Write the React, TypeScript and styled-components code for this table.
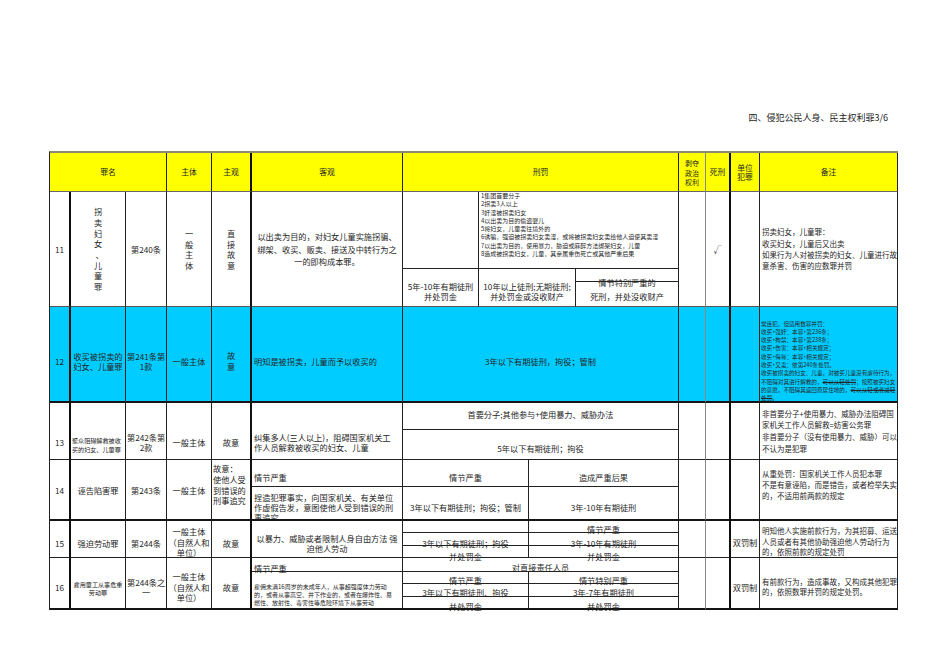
import React from "react";
import styled, { createGlobalStyle } from "styled-components";

const YELLOW = "#ffff00";
const CYAN = "#00ccff";

const GlobalStyle = createGlobalStyle`
  html, body {
    margin: 0;
    padding: 0;
    background: #fff;
  }
  body {
    font-family: "Noto Sans CJK SC", "Liberation Serif", sans-serif;
    color: #262626;
  }
`;

const Page = styled.div`
  width: 950px;
  height: 672px;
  box-sizing: border-box;
  padding-top: 111px;
  overflow: hidden;
`;

const Title = styled.div`
  padding-right: 62px;
  margin-bottom: 26px;
  text-align: right;
  font-size: 9px;
  line-height: 14px;
`;

const Sheet = styled.div`
  margin-left: 49px;
  width: max-content;
  display: grid;
  grid-template-columns: 21px 55px 41px 45px 40px 151px 76px 50px 47px 103px 27px 25px 29px 138px;
  grid-template-rows: 39px 77px 13px 25px 96px 27px 30px 27px 34px 12px 13px 12px 14px 12px 13px 13px;
  border-left: 1px solid #222;
  border-top: 2px solid #8b8b72;
`;

// grid lines that are drawn heavier / lighter in the sheet
const endOf = (span: string) => Number(span.split("/")[1]);
const vLine = (c: string) => {
    const e = endOf(c);
    if (e === 2 || e === 6 || e === 13) return "2px solid #111";
    if (e === 12) return "1px solid #8a8a8a";
    return "1px solid #222";
};
const hLine = (r: string) => {
    const e = endOf(r);
    if (e === 6 || e === 10 || e === 17) return "2px solid #151515";
    if (e === 2) return "1px solid #666";
    if (e === 5) return "1px solid #555";
    return "1px solid #222";
};

type CellProps = {
    $c: string;
    $r: string;
    $bg?: string;
    $ta?: "left" | "center";
    $v?: "flex-start" | "center";
    $pt?: number;
    $pb?: number;
    $px?: number;
    $fs?: number;
    $lh?: number;
    $clip?: boolean;
};

const CellBox = styled.div<CellProps>`
    grid-column: ${p => p.$c};
    grid-row: ${p => p.$r};
    box-sizing: border-box;
    min-width: 0;
    min-height: 0;
    display: flex;
    flex-direction: column;
    justify-content: ${p => p.$v ?? "center"};
    padding: ${p => p.$pt ?? 0}px ${p => p.$px ?? 2}px ${p => p.$pb ?? 0}px;
    background: ${p => p.$bg ?? "transparent"};
    border-right: ${p => vLine(p.$c)};
    border-bottom: ${p => hLine(p.$r)};
    text-align: ${p => p.$ta ?? "center"};
    font-size: ${p => p.$fs ?? 8.2}px;
    line-height: ${p => p.$lh ?? 10}px;
    white-space: nowrap;
    overflow: ${p => (p.$clip ? "hidden" : "visible")};
`;

const CellText = styled.div``;

const StackChar = styled.span<{ $mark?: boolean }>`
    display: block;
    padding-left: ${p => (p.$mark ? "3px" : "0")};
`;

const Struck = styled.span`
    text-decoration: line-through;
`;

function C({ children, ...rest }: CellProps & { children?: React.ReactNode }) {
    return (
        <CellBox {...rest}>
            <CellText>{children}</CellText>
        </CellBox>
    );
}

function Stack({ text }: { text: string }) {
    return (
        <>
            {[...text].map((ch, i) => (
                <StackChar key={i} $mark={ch === "、"}>
                    {ch}
                </StackChar>
            ))}
        </>
    );
}

const H = (props: Omit<CellProps, "$r" | "$bg"> & { children?: React.ReactNode }) => (
    <C {...props} $r="1/2" $bg={YELLOW} $fs={props.$fs ?? 7.8} />
);

const B = (props: Omit<CellProps, "$r" | "$bg"> & { children?: React.ReactNode }) => (
    <C $pt={14} {...props} $r="5/6" $bg={CYAN} />
);

function App() {
    return (
        <Page>
            <GlobalStyle />
            <Title>四、侵犯公民人身、民主权利罪3/6</Title>
            <Sheet>
                {/* header */}
                <H $c="1/4">罪名</H>
                <H $c="4/5">主体</H>
                <H $c="5/6">主观</H>
                <H $c="6/7">客观</H>
                <H $c="7/11">刑罚</H>
                <H $c="11/12" $fs={7} $lh={9.4} $pt={3} $px={1}>
                    剥夺<br />政治<br />权利
                </H>
                <H $c="12/13">死刑</H>
                <H $c="13/14" $lh={9.5} $px={1}>
                    单位<br />犯罪
                </H>
                <H $c="14/15">备注</H>

                {/* 11 */}
                <C $c="1/2" $r="2/5" $px={0}>11</C>
                <C $c="2/3" $r="2/5" $lh={10.7}>
                    <Stack text="拐卖妇女、儿童罪" />
                </C>
                <C $c="3/4" $r="2/5" $px={1}>第240条</C>
                <C $c="4/5" $r="2/5" $lh={10.5}>
                    <Stack text="一般主体" />
                </C>
                <C $c="5/6" $r="2/5" $lh={10.5}>
                    <Stack text="直接故意" />
                </C>
                <C $c="6/7" $r="2/5" $lh={12.5}>
                    以出卖为目的，对妇女儿童实施拐骗、<br />
                    绑架、收买、贩卖、接送及中转行为之<br />
                    一的即构成本罪。
                </C>
                <C $c="7/8" $r="2/3" />
                <C $c="8/11" $r="2/3" $ta="left" $v="flex-start" $fs={6} $lh={8.3}>
                    1集团首要分子<br />
                    2拐卖3人以上<br />
                    3奸淫被拐卖妇女<br />
                    4以出卖为目的偷盗婴儿<br />
                    5将妇女，儿童卖往境外的<br />
                    6诱骗，强迫被拐卖妇女卖淫，或将被拐卖妇女卖给他人迫使其卖淫<br />
                    7以出卖为目的，使用暴力，胁迫或麻醉方法绑架妇女，儿童<br />
                    8造成被拐卖妇女，儿童，其亲属重伤死亡或其他严重后果
                </C>
                <C $c="7/8" $r="3/5" $pt={6} $lh={10} $px={1}>
                    5年-10年有期徒刑<br />并处罚金
                </C>
                <C $c="8/10" $r="3/5" $pt={6} $lh={10}>
                    10年以上徒刑;无期徒刑;<br />并处罚金或没收财产
                </C>
                <C $c="10/11" $r="3/4" $v="flex-start" $pt={8}>情节特别严重的</C>
                <C $c="10/11" $r="4/5" $pt={4}>死刑，并处没收财产</C>
                <C $c="11/12" $r="2/5" />
                <C $c="12/13" $r="2/5">√</C>
                <C $c="13/14" $r="2/5" />
                <C $c="14/15" $r="2/5" $ta="left" $fs={7.5} $lh={11.3}>
                    拐卖妇女，儿童罪：<br />
                    收买妇女，儿童后又出卖<br />
                    如果行为人对被拐卖的妇女、儿童进行故<br />
                    意杀害、伤害的应数罪并罚
                </C>

                {/* 12 */}
                <B $c="1/2" $px={0}>12</B>
                <B $c="2/3" $px={1}>
                    收买被拐卖的<br />妇女、儿童罪
                </B>
                <B $c="3/4" $px={1}>
                    第241条第<br />1款
                </B>
                <B $c="4/5">一般主体</B>
                <B $c="5/6" $lh={11}>
                    故<br />意
                </B>
                <B $c="6/7" $ta="left">明知是被拐卖，儿童而予以收买的</B>
                <B $c="7/11">3年以下有期徒刑，拘役；管制</B>
                <B $c="11/12" />
                <B $c="12/13" />
                <B $c="13/14" />
                <B $c="14/15" $ta="left" $fs={5.6} $lh={8.3} $px={1}>
                    常连犯，但适用数罪并罚：<br />
                    收买+强奸：本罪+第236条；<br />
                    收买+拘禁：本罪+第238条；<br />
                    收买+伤害：本罪+相关规定；<br />
                    收买+侮辱：本罪+相关规定；<br />
                    收买+又卖：依第240条处罚。<br />
                    收买被拐卖的妇女、儿童，对被买儿童没有虐待行为，<br />
                    不阻碍对其进行解救的，<Struck>可以从轻处罚</Struck>；按照被买妇女<br />
                    的意愿，不阻碍其返回原居住地的，<Struck>可以从轻或者减轻</Struck><br />
                    <Struck>处罚</Struck>。
                </B>

                {/* 13 */}
                <C $c="1/2" $r="6/8" $pt={22} $px={0}>13</C>
                <C $c="2/3" $r="6/8" $ta="left" $fs={6.1} $lh={8.4} $pt={29} $px={1}>
                    聚众阻碍解救被收<br />买的妇女、儿童罪
                </C>
                <C $c="3/4" $r="6/8" $pt={22} $lh={10} $px={1}>
                    第242条第<br />2款
                </C>
                <C $c="4/5" $r="6/8" $pt={22}>一般主体</C>
                <C $c="5/6" $r="6/8" $pt={22}>故意</C>
                <C $c="6/7" $r="6/8" $ta="left" $pt={22} $lh={10}>
                    纠集多人(三人以上)，阻碍国家机关工<br />
                    作人员解救被收买的妇女、儿童
                </C>
                <C $c="7/11" $r="6/7" $pb={4}>首要分子;其他参与+使用暴力、威胁办法</C>
                <C $c="7/11" $r="7/8" $pt={6}>5年以下有期徒刑；拘役</C>
                <C $c="11/12" $r="6/8" />
                <C $c="12/13" $r="6/8" />
                <C $c="13/14" $r="6/8" />
                <C $c="14/15" $r="6/8" $ta="left" $fs={7.5} $lh={11.6}>
                    非首要分子+使用暴力、威胁办法阻碍国<br />
                    家机关工作人员解救=妨害公务罪<br />
                    非首要分子（没有使用暴力、威胁）可以<br />
                    不认为是犯罪
                </C>

                {/* 14 */}
                <C $c="1/2" $r="8/10" $px={0}>14</C>
                <C $c="2/3" $r="8/10">诬告陷害罪</C>
                <C $c="3/4" $r="8/10" $px={1}>第243条</C>
                <C $c="4/5" $r="8/10">一般主体</C>
                <C $c="5/6" $r="8/10" $ta="left" $lh={10.7} $pb={10} $px={1}>
                    故意：<br />使他人受<br />到错误的<br />刑事追究
                </C>
                <C $c="6/7" $r="8/9" $ta="left" $pt={8}>情节严重</C>
                <C $c="6/7" $r="9/10" $ta="left" $v="flex-start" $pt={5} $clip>
                    捏造犯罪事实，向国家机关、有关单位<br />
                    作虚假告发，意图使他人受到错误的刑<br />
                    事追究
                </C>
                <C $c="7/9" $r="8/9" $pt={8}>情节严重</C>
                <C $c="9/11" $r="8/9" $pt={8}>造成严重后果</C>
                <C $c="7/9" $r="9/10" $pt={7}>3年以下有期徒刑；拘役；管制</C>
                <C $c="9/11" $r="9/10" $pt={7}>3年-10年有期徒刑</C>
                <C $c="11/12" $r="8/10" />
                <C $c="12/13" $r="8/10" />
                <C $c="13/14" $r="8/10" />
                <C $c="14/15" $r="8/10" $ta="left" $fs={7.5} $lh={11.3} $pb={10}>
                    从重处罚：国家机关工作人员犯本罪<br />
                    不是有意诬陷，而是错告，或者检举失实<br />
                    的，不适用前两款的规定
                </C>

                {/* 15 */}
                <C $c="1/2" $r="10/13" $pt={7} $px={0}>15</C>
                <C $c="2/3" $r="10/13" $pt={7}>强迫劳动罪</C>
                <C $c="3/4" $r="10/13" $pt={7} $px={1}>第244条</C>
                <C $c="4/5" $r="10/13" $pt={6} $lh={10.5} $px={0}>
                    一般主体<br />（自然人和<br />单位）
                </C>
                <C $c="5/6" $r="10/13" $pt={7}>故意</C>
                <C $c="6/7" $r="10/13" $pt={7}>
                    以暴力、威胁或者限制人身自由方法 强<br />迫他人劳动
                </C>
                <C $c="7/9" $r="10/11" />
                <C $c="9/11" $r="10/11" $v="flex-start" $pt={3}>情节严重</C>
                <C $c="7/9" $r="11/12" $v="flex-start" $pt={5}>3年以下有期徒刑；拘役</C>
                <C $c="9/11" $r="11/12" $v="flex-start" $pt={5}>3年-10年有期徒刑</C>
                <C $c="7/9" $r="12/13" $v="flex-start" $pt={5}>并处罚金</C>
                <C $c="9/11" $r="12/13" $v="flex-start" $pt={5}>并处罚金</C>
                <C $c="11/12" $r="10/13" />
                <C $c="12/13" $r="10/13" />
                <C $c="13/14" $r="10/13" $pt={6} $px={1}>双罚制</C>
                <C $c="14/15" $r="10/13" $ta="left" $fs={7.5} $lh={10.5} $pt={6}>
                    明知他人实施前款行为，为其招募、运送<br />
                    人员或者有其他协助强迫他人劳动行为<br />
                    的，依照前款的规定处罚
                </C>

                {/* 16 */}
                <C $c="1/2" $r="13/17" $pt={8} $px={0}>16</C>
                <C $c="2/3" $r="13/17" $fs={6.1} $lh={8.4} $pt={12} $px={1}>
                    雇用童工从事危重<br />劳动罪
                </C>
                <C $c="3/4" $r="13/17" $pt={8} $px={1}>
                    第244条之<br />一
                </C>
                <C $c="4/5" $r="13/17" $pt={8} $lh={10.5} $px={0}>
                    一般主体<br />（自然人和<br />单位）
                </C>
                <C $c="5/6" $r="13/17" $pt={8}>故意</C>
                <C $c="6/7" $r="13/14" $ta="left" $v="flex-start" $pt={5}>情节严重</C>
                <C $c="6/7" $r="14/17" $ta="left" $fs={6} $lh={8.3} $pt={10}>
                    雇佣未满16周岁的未成年人，从事超强度体力劳动<br />
                    的，或者从事高空、井下作业的，或者在爆炸性、易<br />
                    燃性、放射性、毒害性等危险环境下从事劳动
                </C>
                <C $c="7/11" $r="13/14" $v="flex-start" $pt={4}>对直接责任人员</C>
                <C $c="7/9" $r="14/15" $v="flex-start" $pt={3}>情节严重</C>
                <C $c="9/11" $r="14/15" $v="flex-start" $pt={3}>情节特别严重</C>
                <C $c="7/9" $r="15/16" $v="flex-start" $pt={3}>3年以下有期徒刑、拘役</C>
                <C $c="9/11" $r="15/16" $v="flex-start" $pt={3}>3年-7年有期徒刑</C>
                <C $c="7/9" $r="16/17" $v="flex-start" $pt={4}>并处罚金</C>
                <C $c="9/11" $r="16/17" $v="flex-start" $pt={4}>并处罚金</C>
                <C $c="11/12" $r="13/17" />
                <C $c="12/13" $r="13/17" />
                <C $c="13/14" $r="13/17" $pt={8} $px={1}>双罚制</C>
                <C $c="14/15" $r="13/17" $ta="left" $fs={7.5} $lh={10} $pt={8}>
                    有前款行为，造成事故，又构成其他犯罪<br />
                    的，依照数罪并罚的规定处罚。
                </C>
            </Sheet>
        </Page>
    );
}

export default App;
